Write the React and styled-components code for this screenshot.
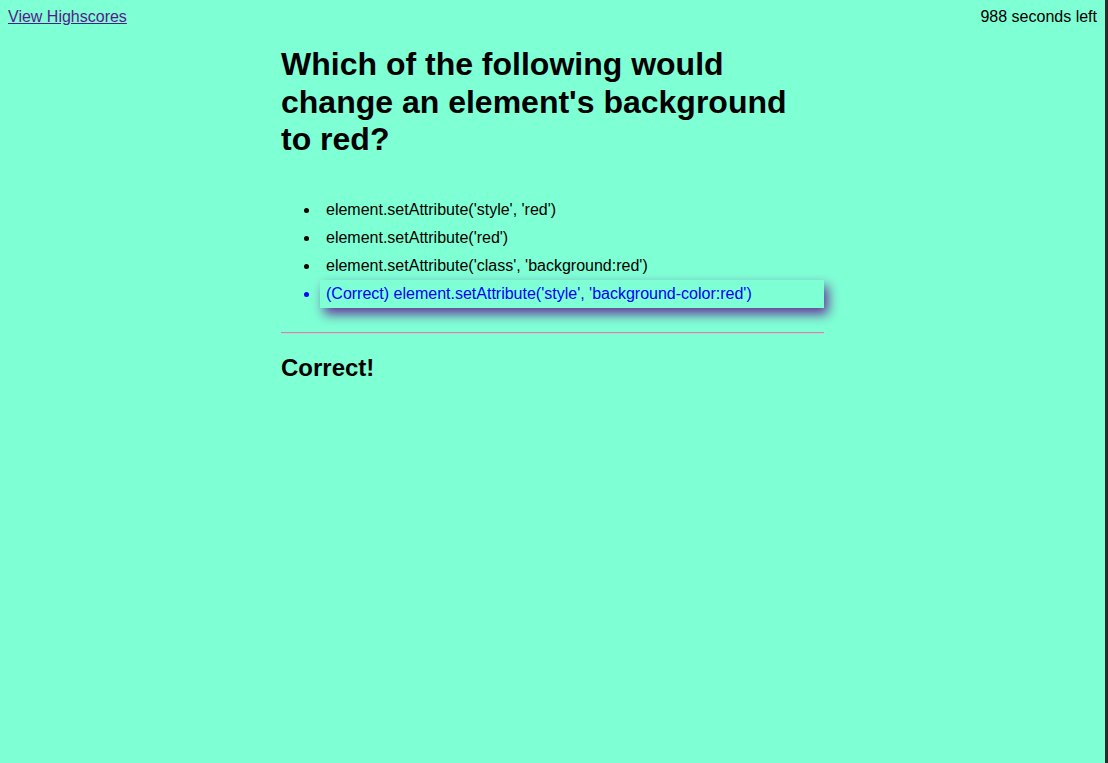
import React from "react";
import styled, { createGlobalStyle } from "styled-components";

const GlobalStyle = createGlobalStyle`
  html {
    background: #2b2b2b;
  }
  body {
    margin: 0 3px 0 0;
    min-height: 763px;
    background-color: aquamarine;
    font-family: "Liberation Sans", Arial, sans-serif;
    color: #000;
  }
`;

const Page = styled.div`
  padding: 8px;
`;

const TopBar = styled.header`
  display: flex;
  justify-content: space-between;
  align-items: center;
  font-size: 16px;
`;

const HighscoreLink = styled.a`
  color: #551a8b;
  text-decoration: underline;
  cursor: pointer;
`;

const Timer = styled.span`
  color: #000;
`;

const Quiz = styled.main`
  width: 543px;
  margin: 0 auto;
`;

const Question = styled.h1`
  font-size: 32px;
  font-weight: bold;
  margin: 20px 0 0;
  line-height: 37.5px;
`;

const Choices = styled.ul`
  margin: 37px 0 0;
  padding-left: 39px;
  list-style: disc;
`;

const Choice = styled.li`
  padding: 5px 6px;
  font-size: 16px;
  line-height: 18px;
  color: ${(p) => (p.$correct ? "blue" : "#000")};
  background: ${(p) => (p.$correct ? "aquamarine" : "transparent")};
  box-shadow: ${(p) => (p.$correct ? "4px 6px 12px #663399" : "none")};
  cursor: pointer;
`;

const Divider = styled.hr`
  margin: 24px 0 0;
  border: 0;
  border-top: 1px solid #a49aa8;
  border-bottom: 1px solid #d4c8d8;
`;

const Result = styled.h2`
  font-size: 24px;
  font-weight: bold;
  margin: 20px 0 0;
`;

const choices = [
  "element.setAttribute('style', 'red')",
  "element.setAttribute('red')",
  "element.setAttribute('class', 'background:red')",
  "(Correct) element.setAttribute('style', 'background-color:red')",
];

export default function App() {
  return (
    <>
      <GlobalStyle />
      <Page>
        <TopBar>
          <HighscoreLink href="#highscores">View Highscores</HighscoreLink>
          <Timer>988 seconds left</Timer>
        </TopBar>
        <Quiz>
          <Question>
            Which of the following would change an element's background to red?
          </Question>
          <Choices>
            {choices.map((c, i) => (
              <Choice key={i} $correct={i === 3}>
                {c}
              </Choice>
            ))}
          </Choices>
          <Divider />
          <Result>Correct!</Result>
        </Quiz>
      </Page>
    </>
  );
}
